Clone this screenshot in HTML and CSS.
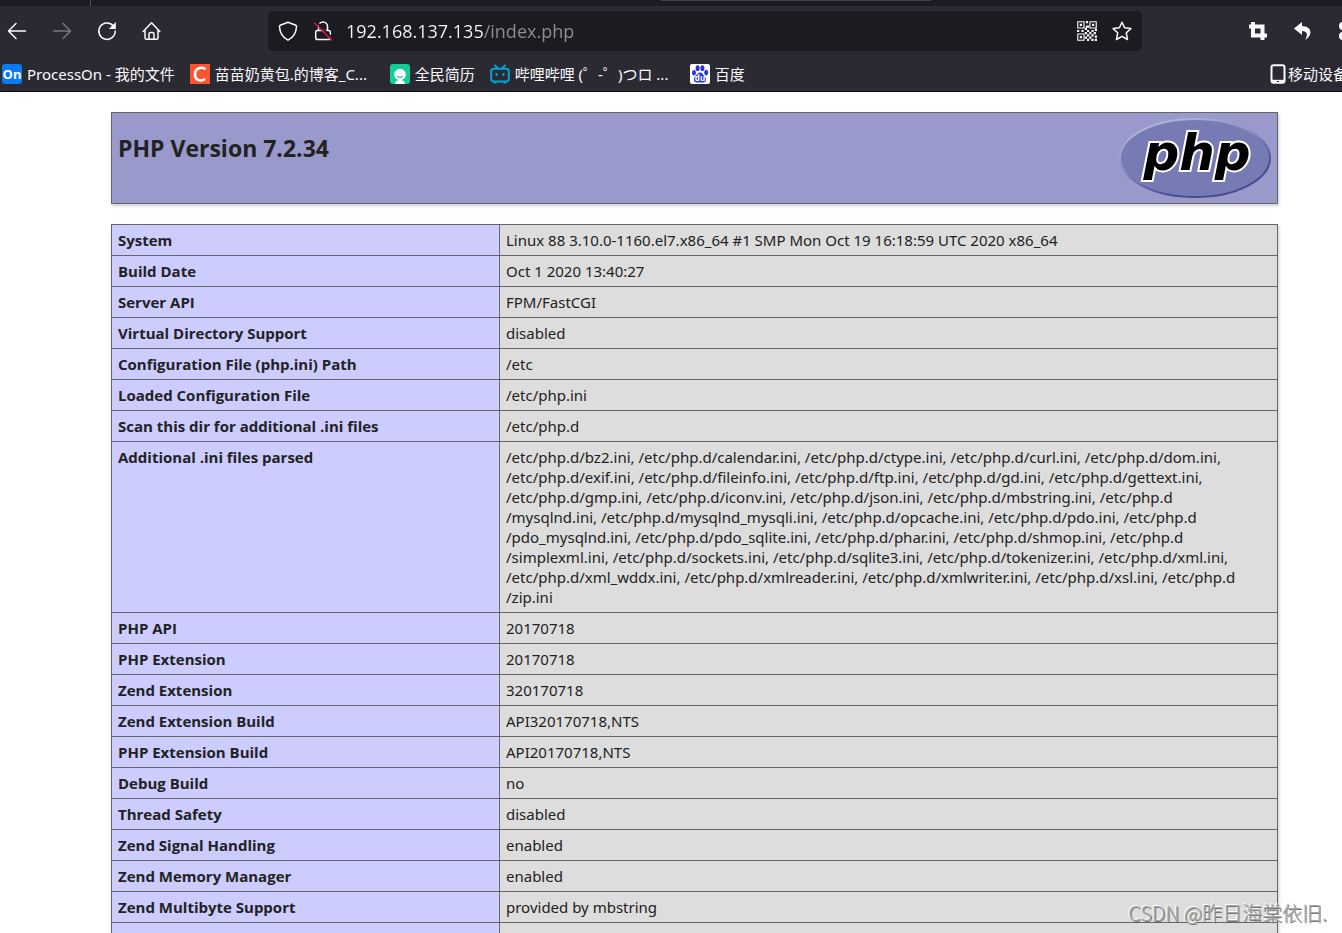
FILE: index.html
```html
<!DOCTYPE html>
<html lang="zh-CN">
<head>
<meta charset="utf-8">
<title>phpinfo()</title>
<link rel="stylesheet" href="styles.css">
</head>
<body>
<header class="chrome">
  <div class="tabstrip"><span class="tab-edge"></span><span class="tab-active"></span></div>
  <nav class="toolbar">
    <div class="nav-buttons">
      <button class="icon-btn" aria-label="Back"><svg width="20" height="20" viewBox="0 0 20 20"><path d="M18.500 10H2M9 2.500L1.500 10L9 17.500"/></svg></button>
      <button class="icon-btn dim" aria-label="Forward"><svg width="20" height="20" viewBox="0 0 20 20"><path d="M1.500 10H18M11 2.500L18.500 10L11 17.500"/></svg></button>
      <button class="icon-btn" aria-label="Reload"><svg width="20" height="20" viewBox="0 0 20 20"><path d="M16.300 4.900A8.200 8.200 0 1 0 18.200 10"/><path class="solid" d="M18.800 1v7h-7z"/></svg></button>
      <button class="icon-btn" aria-label="Home"><svg width="20" height="20" viewBox="0 0 20 20"><path d="M1.200 10.500L9.500 1.800L17.800 10.500M3 9v7.800a1.500 1.500 0 0 0 1.500 1.500h10a1.500 1.500 0 0 0 1.500-1.500V9M7 18v-5a1.500 1.500 0 0 1 1.500-1.500h2a1.500 1.500 0 0 1 1.500 1.500v5"/></svg></button>
    </div>
    <div class="urlbar">
      <button class="icon-btn" aria-label="Tracking protection"><svg width="20" height="20" viewBox="0 0 20 20"><path d="M10 1.200L17.800 4.200Q18.600 4.500 18.500 5.500C18.200 12 15.300 16.500 10 19.200C4.700 16.500 1.800 12 1.500 5.500Q1.400 4.500 2.200 4.200Z"/></svg></button>
      <button class="icon-btn" aria-label="Connection not secure"><svg width="20" height="20" viewBox="0 0 20 20"><path d="M5.500 9V5.500a4.500 4.500 0 0 1 9 0V9M4.500 9.500h11a1.800 1.800 0 0 1 1.800 1.800v5.500a1.800 1.800 0 0 1-1.800 1.800h-11a1.800 1.800 0 0 1-1.800-1.800v-5.500a1.800 1.800 0 0 1 1.800-1.800Z"/><path class="cover" d="M3.500 1L19.500 17.500"/><path class="slash" d="M1.500 2L18.500 19"/></svg></button>
      <input class="address" type="text" aria-label="Address" value="192.168.137.135/index.php">
      <button class="icon-btn" aria-label="QR code"><svg class="qr" width="20" height="20" viewBox="0 0 18 18"><path d="M.7.700h5.600v5.600H.7ZM11.700.700h5.600v5.600h-5.600ZM.7 11.700h5.600v5.600H.7Z"/><path class="solid" d="M2.500 2.500h2v2h-2zM13.500 2.500h2v2h-2zM2.500 13.500h2v2h-2zM8 0h2v2H8zM8 4h3v2H8zM7 6h2v2H7zM0 8h2v2H0zM4 8h2v2H4zM9 8h2v2H9zM13 8h2v2h-2zM16 7h2v2h-2zM7 10h2v2H7zM11 10h2v2h-2zM15 10h2v2h-2zM9 12h2v2H9zM13 12h2v2h-2zM16 13h2v2h-2zM7 14h2v2H7zM11 14h2v2h-2zM9 16h2v2H9zM13 16h2v2h-2zM16 16h2v2h-2z"/></svg></button>
      <button class="icon-btn" aria-label="Bookmark"><svg width="20" height="20" viewBox="0 0 20 20"><path d="M10 1.200L12.600 6.800L18.900 7.600L14.300 11.800L15.500 18.500L10 15.300L4.500 18.500L5.700 11.800L1.100 7.600L7.400 6.800Z"/></svg></button>
    </div>
    <div class="extensions">
      <button class="icon-btn" aria-label="Crop"><svg width="20" height="20" viewBox="0 0 20 20"><path class="heavy" d="M5 1v13.500h14M1 5.500h13.500V19"/></svg></button>
      <button class="icon-btn" aria-label="Undo"><svg width="20" height="20" viewBox="0 0 20 20"><path class="solid" d="M9 1L1 7.500L9 14v-4c5 0 6.500 3.500 3 9C20 14.500 19.500 5.500 9 5Z"/></svg></button>
      <button class="icon-btn" aria-label="Screenshot"><svg width="20" height="20" viewBox="0 0 20 20"><circle class="ring" cx="5" cy="5" r="2.500"/><circle class="ring" cx="5" cy="15" r="2.500"/><path d="M7 6.500L18 17M7 13.500L18 3"/></svg></button>
    </div>
  </nav>
  <nav class="bookmarks">
    <a class="bookmark" href="#"><svg width="20" height="20" viewBox="0 0 20 20"><rect width="20" height="20" rx="3" fill="#087bf2"/><text class="logo-on" x="10" y="15" text-anchor="middle">On</text></svg>ProcessOn - 我的文件</a>
    <a class="bookmark full" href="#"><svg width="20" height="20" viewBox="0 0 20 20"><rect width="20" height="20" fill="#fc5531"/><path d="M15.500 5.200C12 2.300 5 4 5 10.500C5 17 11.500 17.500 15 15" fill="none" stroke="#fff" stroke-width="2.600"/></svg>苗苗奶黄包.的博客_C...</a>
    <a class="bookmark" href="#"><svg width="20" height="20" viewBox="0 0 20 20"><rect width="20" height="20" rx="3" fill="#13ce96"/><circle cx="10" cy="10.500" r="5.800" fill="#fff"/><path d="M5 20q0-4 5-4t5 4Z" fill="#fff"/><path d="M7.500 12q2.500 3 5 0" fill="none" stroke="#13ce96" stroke-width="1.200"/></svg>全民简历</a>
    <a class="bookmark full" href="#"><svg width="20" height="20" viewBox="0 0 20 20"><path d="M5 1.500L8 4.500M15 1.500L12 4.500" fill="none" stroke="#00a1d6" stroke-width="2" stroke-linecap="round"/><rect x="1.200" y="4.800" width="17.600" height="12.800" rx="2.500" fill="none" stroke="#00a1d6" stroke-width="2"/><path d="M6.500 9v3M13.500 9v3M3.500 18.500h3M13.500 18.500h3" stroke="#00a1d6" stroke-width="2"/></svg>哔哩哔哩 (゜-゜)つロ ...</a>
    <a class="bookmark" href="#"><svg width="20" height="20" viewBox="0 0 20 20"><rect width="20" height="20" rx="2" fill="#fff"/><g fill="#2932e1"><ellipse cx="4" cy="8.800" rx="2" ry="2.700"/><ellipse cx="7.600" cy="4.200" rx="2" ry="2.900"/><ellipse cx="12.400" cy="4.200" rx="2" ry="2.900"/><ellipse cx="16.200" cy="8.500" rx="2" ry="2.700"/><path d="M10 8.500c2 0 3 2.200 4.500 3.700c2 2 2.500 6.300-1.500 6.300H7c-4 0-3.500-4.300-1.500-6.300C7 10.700 8 8.500 10 8.500Z"/></g><text class="logo-du" x="10" y="17" text-anchor="middle">du</text></svg>百度</a>
    <a class="bookmark mobile" href="#"><svg width="16" height="20" viewBox="0 0 16 20"><rect x="1.500" y="1.200" width="13" height="17.600" rx="2" fill="none" stroke="#fbfbfe" stroke-width="2"/><path d="M2 17.300h12" stroke="#fbfbfe" stroke-width="3"/><path d="M7 17.500h2" stroke="#2b2a33"/></svg>移动设备</a>
  </nav>
</header>
<main class="page">
  <section class="banner">
    <h1 class="version">PHP Version 7.2.34</h1>
    <svg class="php-logo" width="152" height="80" viewBox="0 0 152 80" role="img" aria-label="PHP logo">
      <defs>
        <linearGradient id="rim" x1="0.2" y1="0" x2="0.8" y2="1"><stop offset="0" stop-color="#b9b9dc"/><stop offset="0.400" stop-color="#8f90c5"/><stop offset="0.600" stop-color="#6668a8"/><stop offset="0.800" stop-color="#474a91"/><stop offset="1" stop-color="#474a91"/></linearGradient>
      </defs>
      <ellipse cx="76" cy="40" rx="75" ry="39" fill="#777bb3" stroke="url(#rim)" stroke-width="2"/>
      <text class="php-word" x="78" y="52" text-anchor="middle">php</text>
    </svg>
  </section>
  <table class="info">
    <tbody>
      <tr><th scope="row">System</th><td>Linux 88 3.10.0-1160.el7.x86_64 #1 SMP Mon Oct 19 16:18:59 UTC 2020 x86_64</td></tr>
      <tr><th scope="row">Build Date</th><td>Oct 1 2020 13:40:27</td></tr>
      <tr><th scope="row">Server API</th><td>FPM/FastCGI</td></tr>
      <tr><th scope="row">Virtual Directory Support</th><td>disabled</td></tr>
      <tr><th scope="row">Configuration File (php.ini) Path</th><td>/etc</td></tr>
      <tr><th scope="row">Loaded Configuration File</th><td>/etc/php.ini</td></tr>
      <tr><th scope="row">Scan this dir for additional .ini files</th><td>/etc/php.d</td></tr>
      <tr><th scope="row">Additional .ini files parsed</th><td>/etc/php.d/bz2.ini, /etc/php.d/calendar.ini, /etc/php.d/ctype.ini, /etc/php.d/curl.ini, /etc/php.d/dom.ini,<br>/etc/php.d/exif.ini, /etc/php.d/fileinfo.ini, /etc/php.d/ftp.ini, /etc/php.d/gd.ini, /etc/php.d/gettext.ini,<br>/etc/php.d/gmp.ini, /etc/php.d/iconv.ini, /etc/php.d/json.ini, /etc/php.d/mbstring.ini, /etc/php.d<br>/mysqlnd.ini, /etc/php.d/mysqlnd_mysqli.ini, /etc/php.d/opcache.ini, /etc/php.d/pdo.ini, /etc/php.d<br>/pdo_mysqlnd.ini, /etc/php.d/pdo_sqlite.ini, /etc/php.d/phar.ini, /etc/php.d/shmop.ini, /etc/php.d<br>/simplexml.ini, /etc/php.d/sockets.ini, /etc/php.d/sqlite3.ini, /etc/php.d/tokenizer.ini, /etc/php.d/xml.ini,<br>/etc/php.d/xml_wddx.ini, /etc/php.d/xmlreader.ini, /etc/php.d/xmlwriter.ini, /etc/php.d/xsl.ini, /etc/php.d<br>/zip.ini</td></tr>
      <tr><th scope="row">PHP API</th><td>20170718</td></tr>
      <tr><th scope="row">PHP Extension</th><td>20170718</td></tr>
      <tr><th scope="row">Zend Extension</th><td>320170718</td></tr>
      <tr><th scope="row">Zend Extension Build</th><td>API320170718,NTS</td></tr>
      <tr><th scope="row">PHP Extension Build</th><td>API20170718,NTS</td></tr>
      <tr><th scope="row">Debug Build</th><td>no</td></tr>
      <tr><th scope="row">Thread Safety</th><td>disabled</td></tr>
      <tr><th scope="row">Zend Signal Handling</th><td>enabled</td></tr>
      <tr><th scope="row">Zend Memory Manager</th><td>enabled</td></tr>
      <tr><th scope="row">Zend Multibyte Support</th><td>provided by mbstring</td></tr>
      <tr><th scope="row">IPv6 Support</th><td>enabled</td></tr>
    </tbody>
  </table>
</main>
<div class="watermark">CSDN @昨日海棠依旧.</div>
</body>
</html>
```

FILE: styles.css
```css
* { box-sizing: border-box; }

body {
  margin: 0;
  height: 100vh;
  overflow: hidden;
  position: relative;
  background: #fff;
  color: #222;
  font-family: "Noto Sans", "Noto Sans CJK SC", sans-serif;
  font-size: 15px;
  line-height: 20px;
}

.chrome {
  background: #2b2a33;
  color: #fbfbfe;
  border-bottom: 1px solid #0c0c0d;
}

.tabstrip {
  display: flex;
  height: 6px;
  background: #1c1b22;
}
.tab-edge { width: 91px; border-right: 1px solid #55545e; }
.tab-active { width: 270px; height: 1px; margin-left: 570px; background: #42414d; }

.toolbar {
  display: flex;
  align-items: center;
  padding-top: 5px;
  height: 45px;
}
.nav-buttons { display: flex; gap: 25px; padding-left: 7px; width: 268px; flex: none; }
.icon-btn {
  display: flex;
  padding: 0;
  border: 0;
  background: none;
  color: #fbfbfe;
}
.icon-btn.dim { color: #777680; }
.icon-btn svg {
  fill: none;
  stroke: currentColor;
  stroke-width: 1.5;
  stroke-linecap: round;
  stroke-linejoin: round;
}
.icon-btn .solid { fill: currentColor; stroke: none; }
.icon-btn .heavy { stroke-width: 4; stroke-linecap: butt; stroke-linejoin: miter; }
.icon-btn .ring { stroke-width: 3; }
.icon-btn .cover { stroke: #1c1b22; stroke-width: 2; }
.icon-btn .slash { stroke: #e2163f; }
.icon-btn .qr { stroke-linejoin: miter; stroke-width: 1; }

.urlbar {
  display: flex;
  align-items: center;
  gap: 15px;
  flex: 1;
  min-width: 0;
  height: 40px;
  padding: 0 10px;
  border-radius: 5px;
  background: #1c1b22;
}
.address {
  flex: 1;
  min-width: 0;
  height: 30px;
  margin-left: -2px;
  padding: 0;
  border: 0;
  outline: 0;
  font: 18px/30px "Open Sans", sans-serif;
  color: transparent;
  background: linear-gradient(to right, #fbfbfe 137px, #8f8f96 137px);
  -webkit-background-clip: text;
  background-clip: text;
}
.extensions {
  display: flex;
  gap: 25px;
  flex: none;
  width: 200px;
  padding-left: 106px;
  overflow: hidden;
}
.extensions .icon-btn { flex: none; }

.bookmarks {
  display: flex;
  align-items: center;
  gap: 15px;
  height: 40px;
  padding: 5px 0 0 2px;
  overflow: hidden;
}
.bookmark {
  display: flex;
  align-items: center;
  gap: 5px;
  flex: none;
  color: #fbfbfe;
  text-decoration: none;
  white-space: nowrap;
}
.full { min-width: 185px; }
.mobile { gap: 2px; margin-left: auto; margin-right: -6px; }
.logo-on { font: bold 13px "Open Sans", sans-serif; fill: #fff; }
.logo-du { font: bold 8px "Open Sans", sans-serif; fill: #fff; }

.page { padding: 20px 64px 0 111px; }

.banner {
  display: flex;
  justify-content: space-between;
  height: 92px;
  margin-bottom: 20px;
  padding: 5px 6px;
  border: 1px solid #666;
  background: #9999cc;
  box-shadow: 1px 2px 3px #ccc;
}
.version {
  margin: 14px 0 0;
  font: 700 23px/32px "Open Sans", sans-serif;
}
.php-word {
  font: italic bold 50px "DejaVu Sans", sans-serif;
  fill: #000;
  stroke: #fff;
  stroke-width: 4;
  paint-order: stroke;
}

.info {
  width: 100%;
  border-collapse: collapse;
  table-layout: fixed;
  box-shadow: 1px 2px 3px #ccc;
}
.info th, .info td {
  padding: 5px 6px;
  border: 1px solid #666;
  text-align: left;
  vertical-align: top;
}
.info th { width: 388px; background: #ccccff; font-family: "Open Sans", sans-serif; font-weight: 700; }
.info td { background: #ddd; white-space: nowrap; }

.watermark {
  position: absolute;
  right: 15px;
  bottom: 5px;
  font: 300 20px/30px "Noto Sans CJK SC", sans-serif;
  color: #a8a8a8;
  text-shadow: 1px 1px 0 #777, -1px -1px 0 #fff;
}
```
